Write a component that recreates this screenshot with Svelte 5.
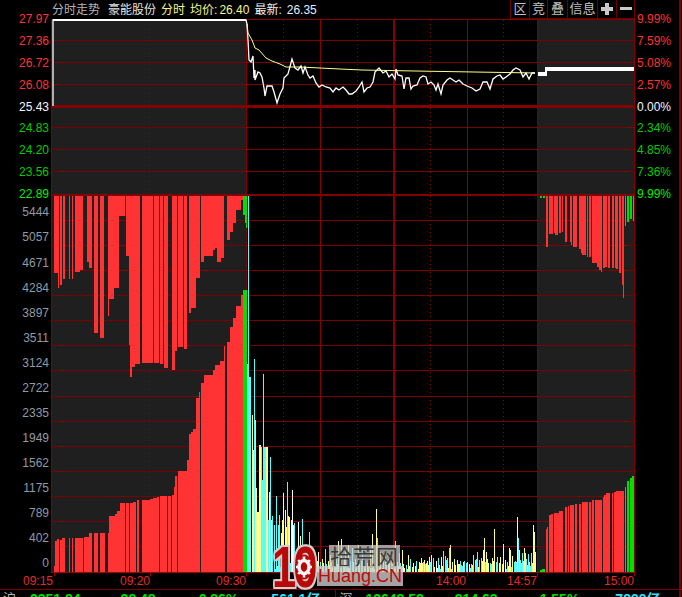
<script>
  const RED = '#ff3333';
  const GREEN = '#00e000';
  const COL = { c: '#55ffff', y: '#ffff88', w: '#ffffff' };

  const priceLeft = [
    ['27.97', 'up'], ['27.36', 'up'], ['26.72', 'up'], ['26.08', 'up'], ['25.43', 'flat'],
    ['24.83', 'down'], ['24.20', 'down'], ['23.56', 'down'], ['22.89', 'down bright']
  ];
  const priceRight = [
    ['9.99%', 'up'], ['7.59%', 'up'], ['5.08%', 'up'], ['2.57%', 'up'], ['0.00%', 'flat'],
    ['2.34%', 'down'], ['4.85%', 'down'], ['7.36%', 'down'], ['9.99%', 'down bright']
  ];
  const volumes = [5444, 5057, 4671, 4284, 3897, 3511, 3124, 2722, 2335, 1949, 1562, 1175, 789, 402, 0];

  const thinH = [40, 62, 84, 127.5, 149.5, 171.5, 220, 245, 270, 295, 320, 345, 370, 396, 421, 446, 471, 496, 521, 546];
  const dotted = [149, 283, 357, 430, 503];
  const solidV = [246.5, 320.5, 467.5];
  const ticks = [54, 150, 246, 467, 537, 634];

  // morning auction, hanging from the top: [x0, x1, bottom] in 3x-zoom x units
  const hangL = [
    [162,175,273],[175,178,288],[181,187,285],[189,195,279],[207,211,279],[216,220,279],[225,240,272],
    [240,250,270],[260,267,262],[267,277,268],[283,295,333],[300,312,338],[323,326,316],[326,343,299],
    [343,358,288],[358,375,216],[378,386,256],[386,390,345],[390,397,377],[397,404,367],[404,420,364],
    [426,460,363],[461,478,363],[480,488,364],[493,503,368],[516,525,370],[525,532,351],[534,548,347],
    [552,562,349],[568,572,313],[572,588,308],[588,600,278],[604,612,262],[612,640,256],[640,645,250],
    [645,652,248],[652,662,262],[662,672,258],[680,690,240],[690,700,232],[700,708,223],[708,722,210],[722,729,200]
  ];
  // morning auction, standing on the floor: [x0, x1, top]
  const standL = [
    [162,165,566],[165,171,541],[171,177,539],[181,185,540],[187,195,538],[207,210,538],[216,219,538],
    [225,240,538],[240,250,538],[252,260,537],[260,267,537],[267,277,533],[282,293,533],[300,315,533],
    [323,327,533],[327,345,516],[345,350,514],[350,360,511],[360,375,503],[378,388,503],[390,400,503],
    [400,408,502],[410,418,500],[426,450,500],[450,460,499],[460,472,498],[472,478,497],[480,488,496],
    [490,500,496],[503,512,496],[516,522,495],[522,526,487],[526,532,476],[534,548,471],[548,560,471],
    [562,566,460],[568,573,434],[573,580,432],[580,588,429],[588,596,398],[596,600,392],[604,612,383],
    [612,640,375],[640,645,370],[645,660,365],[660,672,361],[672,676,346],[680,690,342],[690,700,327],
    [700,708,318],[708,722,306],[722,729,295]
  ];
  // closing auction: x in 3x units from x = 530
  const hangR = [
    [47,54,247],[57,62,234],[63,69,234],[72,75,233],[75,84,235],[86,93,233],[95,100,232],[105,111,242],
    [120,123,242],[123,126,245],[128,141,247],[147,152,249],[152,157,253],[157,168,255],[171,174,257],
    [176,183,257],[186,192,263],[192,200,263],[200,207,267],[207,212,270],[212,216,272],[219,225,268],
    [225,231,267],[234,240,268],[245,251,268],[254,258,268],[258,263,269],[267,274,273],[276,280,285],[280,282,298]
  ];
  const hangRG = [[285,288,226],[291,297,222],[300,305,219],[308,312,221]];
  // closing auction: x in 3x units from x = 340
  const standR = [
    [618,622,529],[622,625,527],[627,632,515],[633,640,514],[642,650,513],[651,656,513],[658,668,511],
    [675,681,507],[684,688,506],[690,696,505],[697,703,505],[705,712,504],[716,722,504],[725,735,502],
    [736,745,502],[746,752,502],[757,763,500],[765,773,500],[775,785,500],[788,793,497],[793,798,495],
    [798,810,493],[815,820,493],[822,828,492],[828,838,491],[838,851,491]
  ];
  const standRG = [[600,605,570],[607,614,569],[855,858,487],[862,867,481],[869,875,478],[877,881,476]];

  const seg = (list, off) => list.map(([a, b, v]) => {
    const x = off + Math.round(a / 3);
    return { x, w: Math.max(1, off + Math.round(b / 3) - x), v };
  });

  const bars = [
    ...seg(hangL, 0).map((s) => ({ ...s, y: 196, h: s.v - 196, f: RED })),
    ...seg(standL, 0).map((s) => ({ ...s, y: s.v, h: 572 - s.v, f: RED })),
    ...seg(hangR, 530).map((s) => ({ ...s, y: 196, h: s.v - 196, f: RED })),
    ...seg(hangRG, 530).map((s) => ({ ...s, y: 196, h: s.v - 196, f: GREEN })),
    ...seg(standR, 340).map((s) => ({ ...s, y: s.v, h: 572 - s.v, f: RED })),
    ...seg(standRG, 340).map((s) => ({ ...s, y: s.v, h: 572 - s.v, f: GREEN })),
    { x: 243, w: 2, y: 196, h: 19, f: GREEN },
    { x: 245, w: 1, y: 196, h: 27, f: GREEN },
    { x: 246, w: 1, y: 196, h: 32, f: GREEN },
    { x: 243, w: 4, y: 290, h: 282, f: GREEN },
    { x: 540, w: 2, y: 196, h: 2, f: GREEN },
    { x: 543, w: 2, y: 196, h: 2, f: GREEN }
  ];

  // continuous session volume: [x, top, colour]
  const tall = [
    [247,364,'c'],[248,196,'c'],[249,377,'c'],[250,377,'c'],[252,415,'y'],[253,450,'y'],[254,359,'c'],
    [255,420,'y'],[256,488,'y'],[257,512,'w'],[258,512,'y'],[259,445,'y'],[260,445,'y'],[261,447,'c'],
    [262,480,'c'],[263,374,'c'],[264,447,'c'],[265,447,'c'],[266,447,'y'],[267,447,'y'],[268,520,'c'],[269,492,'y'],
    [270,457,'c'],[271,520,'w'],[272,516,'c'],[274,525,'c'],[276,496,'c'],[278,525,'c'],[279,515,'c'],
    [281,533,'y'],[282,520,'y'],[283,493,'y'],[285,510,'y'],[286,527,'y'],[287,482,'c'],[288,516,'y'],
    [289,517,'y'],[291,520,'y'],[292,490,'w'],[293,525,'y'],[294,523,'c'],[298,522,'w'],[300,536,'y'],
    [302,519,'c'],[305,545,'c'],[309,532,'c'],[318,552,'y'],[325,549,'c'],[330,555,'y'],[336,558,'c'],
    [338,541,'y'],[341,539,'y'],[345,548,'c'],[348,545,'y'],[352,548,'c'],[358,545,'y'],[362,550,'c'],
    [370,548,'y'],[372,534,'y'],[376,509,'y'],[377,538,'c'],[380,552,'y'],[385,553,'c'],[395,541,'c'],
    [399,553,'c'],[402,550,'y'],[408,555,'y'],[413,563,'y'],[415,566,'y'],[420,563,'y'],[421,558,'y'],
    [423,562,'c'],[426,563,'y'],[429,557,'y'],[431,555,'y'],[433,558,'c'],[436,561,'w'],[438,558,'c'],
    [441,557,'y'],[443,551,'c'],[445,556,'c'],[447,558,'c'],[449,548,'c'],[450,545,'y'],[447,564,'y'],
    [455,565,'y'],[459,564,'y'],[462,566,'c'],[464,561,'c'],[467,562,'y'],[469,564,'y'],[471,564,'c'],
    [473,555,'c'],[475,560,'c'],[477,552,'c'],[479,560,'c'],[481,558,'c'],[483,550,'y'],[484,538,'y'],
    [486,552,'y'],[490,563,'c'],[492,558,'y'],[494,529,'y'],[497,557,'c'],[500,557,'y'],[503,544,'y'],
    [505,560,'y'],[507,562,'c'],[509,548,'y'],[510,550,'y'],[512,556,'y'],[514,562,'c'],[517,549,'y'],
    [519,550,'y'],[522,553,'c'],[524,548,'y'],[516,562,'c'],[517,517,'y'],[518,538,'c'],[520,560,'c'],
    [523,561,'y'],[525,553,'y'],[526,559,'c'],[528,554,'c'],[531,553,'c'],[533,525,'y'],[534,532,'y'],[535,552,'y']
  ];
  const taken = new Set(tall.map((b) => b[0]));
  const fill = [];
  for (let x = 268; x < 536; x++) {
    if (!taken.has(x) && x % 3 !== 0) {
      fill.push([x, 572 - (3 + ((x * 7) % 11)), x % 5 < 2 ? 'c' : 'y']);
    }
  }
  const vols = [...fill, ...tall];

  const priceLine = '53,106 53,20 246,20 247,24 248,40 249,60 251,62 253,56 254,78 255,70 255,80 258,72 260,73 262,77 264,88 265,96 267,86 272,86 274,92 277,103 280,94 283,88 284,78 288,74 292,59 295,68 298,70 301,66 303,73 305,67 308,75 310,78 313,76 316,83 319,87 322,85 326,87 330,88 333,92 336,88 339,90 343,87 346,90 349,94 352,94 356,91 359,87 362,82 364,92 367,88 370,87 373,82 375,72 379,68 383,73 386,71 389,77 392,74 395,79 396,69 398,75 402,76 404,89 406,78 409,78 411,89 413,86 417,85 420,78 423,76 426,77 428,84 431,82 434,85 436,90 438,84 441,94 443,85 447,80 450,78 453,80 456,82 459,80 463,84 467,86 472,88 476,91 480,89 483,82 487,82 490,89 493,79 497,76 500,75 503,79 506,77 510,74 513,70 516,68 520,70 523,77 526,73 529,79 532,73 535,73';
  const avgLine = '247,24 248,33 252,40 255,48 259,50 266,58 272,61 280,64 286,67 300,67 320,68 340,69 362,70 415,71 474,72 535,73';

  const times = [
    ['09:15', 53], ['09:20', 97], ['09:30', 96], ['14:00', 220], ['14:57', 71], ['15:00', 97]
  ];
</script>

<div class="screen">
  <header class="top">
    <span class="name">分时走势</span>
    <span class="stock">豪能股份</span>
    <span class="tag">分时</span>
    <span class="tag">均价:</span><span class="tag num">26.40</span>
    <span class="latest">最新:</span><span class="latest num cool">26.35</span>
    <nav class="tools">
      <span class="tool w19">区</span>
      <span class="tool w18">竞</span>
      <span class="tool w20">叠</span>
      <span class="tool w30">信息</span>
      <span class="tool w19">
        <svg width="12" height="12" viewBox="0 0 12 12"><path d="M4 0h4v4h4v4H8v4H4V8H0V4h4z" fill="#c8c8c8" /></svg>
      </span>
      <span class="tool w19 last">
        <svg width="12" height="12" viewBox="0 0 12 12"><rect y="4" width="12" height="3" fill="#c8c8c8" /></svg>
      </span>
    </nav>
  </header>

  <div class="body">
    <div class="axis left">
      <div class="prices">
        {#each priceLeft as [t, c]}<div class="p {c}">{t}</div>{/each}
      </div>
      <div class="volumes">
        {#each volumes as v}<div class="v">{v}</div>{/each}
      </div>
    </div>

    <svg class="chart" width="584" height="554" viewBox="51 19 584 554" shape-rendering="crispEdges">
      <rect x="52" y="19" width="195" height="553" fill="#1f1f1f" />
      <rect x="537" y="19" width="98" height="553" fill="#1f1f1f" />

      {#each thinH as y}
        <line x1="51" x2="635" y1={y} y2={y} stroke="#7c0000" />
      {/each}
      <rect x="51" y="105" width="584" height="3" fill="#850000" />
      <rect x="51" y="194" width="584" height="2" fill="#850000" />
      <rect x="51" y="19" width="584" height="1" fill="#850000" />
      <rect x="51" y="572" width="584" height="1" fill="#a00000" />

      {#each dotted as x}
        <line x1={x + 0.5} x2={x + 0.5} y1="20" y2="572" stroke="#900000" stroke-dasharray="1 3" />
      {/each}
      {#each solidV as x}
        <line x1={x} x2={x} y1="20" y2="572" stroke="#850000" />
      {/each}
      <rect x="393" y="20" width="2" height="552" fill="#850000" />
      <rect x="51" y="19" width="1" height="553" fill="#850000" />
      <rect x="634" y="19" width="1" height="553" fill="#850000" />
      <rect x="537" y="20" width="1" height="552" fill="#5a1010" />

      {#each bars as b}
        <rect x={b.x} y={b.y} width={b.w} height={b.h} fill={b.f} />
      {/each}
      {#each vols as [x, top, c]}
        <rect {x} y={top} width="1" height={572 - top} fill={COL[c]} />
      {/each}

      <g shape-rendering="auto" fill="none">
        <polyline points={avgLine} stroke="#ffff88" stroke-width="1" />
        <polyline points={priceLine} stroke="#ffffff" stroke-width="1.3" />
      </g>
      <rect x="53" y="19" width="193" height="2" fill="#fff" />
      <rect x="538" y="72" width="7" height="4" fill="#fff" />
      <rect x="545" y="67" width="89" height="4" fill="#fff" />
      <rect x="545" y="67" width="2" height="9" fill="#fff" />

      {#each ticks as x}
        <rect {x} y="572" width="1" height="4" fill="#a00000" />
      {/each}
    </svg>

    <div class="axis right">
      {#each priceRight as [t, c]}<div class="p {c}">{t}</div>{/each}
    </div>
  </div>

  <div class="times">
    {#each times as [t, w]}
      <span class="time" style="width:{w}px">{t}</span>
    {/each}
  </div>

  <footer class="status">
    <span class="idx">沪</span>
    <span class="g a1">2351.84</span>
    <span class="g a2">28.48</span>
    <span class="g a3">0.86%</span>
    <span class="c a4">561.1亿</span>
    <span class="sep"></span>
    <span class="idx">深</span>
    <span class="g b1">12648.58</span>
    <span class="g b2">814.63</span>
    <span class="g b3">1.55%</span>
    <span class="c b4">7899亿</span>
  </footer>

  <div class="mark">
    <span class="ten">10</span>
    <svg class="gear" width="18" height="26" viewBox="0 0 18 26">
      <ellipse cx="9" cy="13" rx="8.5" ry="12.5" fill="#b80808" />
      <ellipse cx="9" cy="13" rx="5" ry="6.5" fill="none" stroke="#f4f4f4" stroke-width="3.5" />
      <g stroke="#f4f4f4" stroke-width="2.6">
        <path d="M9 2.5v4M9 19.5v4M1 13h3M14 13h3M3.2 6l2.6 3M14.8 6l-2.6 3M3.2 20l2.6-3M14.8 20l-2.6-3" />
      </g>
      <circle cx="9" cy="13" r="2.2" fill="#b80808" />
    </svg>
    <span class="han">拾荒网</span>
    <span class="en">Huang.CN</span>
  </div>
</div>

<style>
  :global(body) {
    margin: 0;
    background: #000;
  }
  .screen {
    position: relative;
    width: 682px;
    height: 597px;
    background: linear-gradient(#7c0000, #7c0000) 679px 0 / 2px 100% no-repeat #000;
    overflow: hidden;
    font-family: "Liberation Sans", Arial, "Noto Sans CJK SC", sans-serif;
    font-size: 12px;
  }

  .top {
    display: flex;
    align-items: center;
    height: 19px;
    padding: 0 47px 0 52px;
    box-sizing: border-box;
    white-space: nowrap;
    font-family: "Liberation Sans", "Noto Sans CJK SC", sans-serif;
    line-height: 18px;
  }
  .name { color: #b4b4b4; }
  .stock { color: #e4e4e4; margin-left: 8px; }
  .tag { color: #f6f68c; margin-left: 5px; }
  .num { margin-left: 2px; }
  .latest { color: #f0f0f0; margin-left: 5px; }
  .cool { color: #e0f0ff; }
  .tools {
    display: flex;
    margin-left: auto;
    height: 19px;
  }
  .tool {
    display: flex;
    align-items: center;
    justify-content: center;
    box-sizing: border-box;
    height: 19px;
    border-left: 1px solid #6a0000;
    border-bottom: 1px solid #6a0000;
    color: #c0c0c0;
    font-size: 13px;
  }
  .w18 { width: 18px; }
  .w19 { width: 19px; }
  .w20 { width: 20px; }
  .w30 { width: 30px; }
  .last { border-right: 1px solid #6a0000; }

  .body {
    display: grid;
    grid-template-columns: 51px 584px 47px;
    height: 554px;
  }
  .axis {
    display: flex;
    flex-direction: column;
    line-height: 1;
  }
  .left {
    align-items: stretch;
    text-align: right;
    padding-right: 2px;
    margin-top: -10px;
  }
  .right {
    margin-top: -10px;
    padding-left: 2px;
  }
  .p {
    height: 21.9px;
    line-height: 21.9px;
    font-size: 12px;
    flex: none;
  }
  .volumes {
    margin-top: -5.6px;
  }
  .v {
    height: 25.07px;
    line-height: 25.07px;
    color: #8f9aa6;
  }
  .up { color: #ff3232; }
  .flat { color: #f2f8ff; }
  .down { color: #00cc00; }
  .bright { color: #00ee00; }

  .chart {
    display: block;
    overflow: visible;
  }

  .times {
    display: flex;
    height: 16px;
    line-height: 16px;
    color: #e52a2a;
    box-sizing: border-box;
  }
  .time {
    text-align: right;
    flex: none;
  }

  .status {
    position: relative;
    display: flex;
    align-items: flex-start;
    height: 8px;
    border-top: 1px solid #7c0000;
    overflow: hidden;
    font-size: 14px;
    line-height: 14px;
    white-space: nowrap;
    padding-top: 2px;
    box-sizing: border-box;
    font-weight: bold;
  }
  .idx {
    color: #b4b4b4;
    font-weight: normal;
    font-size: 13px;
    width: 0;
    margin-left: 3px;
  }
  .g { color: #00e000; }
  .c { color: #33e0ff; }
  .a1 { margin-left: 27px; }
  .a2 { margin-left: 40px; }
  .a3 { margin-left: 43px; }
  .a4 { margin-left: 33px; }
  .sep {
    width: 1px;
    height: 8px;
    margin: -2px 0 0 15px;
    background: #7c0000;
  }
  .b1 { margin-left: 26px; }
  .b2 { margin-left: 31px; }
  .b3 { margin-left: 42px; }
  .b4 { margin-left: 36px; }

  .mark {
    position: absolute;
    left: 272px;
    top: 545px;
    width: 132px;
    height: 44px;
  }
  .ten {
    position: absolute;
    left: 0;
    top: 0;
    font-size: 58px;
    line-height: 44px;
    font-weight: bold;
    color: #b80808;
    letter-spacing: -4px;
    transform: scaleX(0.75);
    transform-origin: left top;
    text-shadow: 2px 0 0 #cfcfcf, -2px 0 0 #cfcfcf, 0 2px 0 #cfcfcf, 0 -2px 0 #cfcfcf, 2px 2px 0 #cfcfcf, -2px -2px 0 #cfcfcf, 2px -2px 0 #cfcfcf, -2px 2px 0 #cfcfcf;
  }
  .gear {
    position: absolute;
    left: 23px;
    top: 9px;
  }
  .han {
    position: absolute;
    left: 57px;
    top: 0;
    padding: 0 1px;
    font-size: 22px;
    line-height: 21px;
    color: #3a3a3a;
    background: rgba(205, 205, 205, 0.75);
    font-family: "Noto Sans CJK SC", sans-serif;
    letter-spacing: 1px;
  }
  .en {
    position: absolute;
    left: 45px;
    top: 21px;
    padding: 0 1px;
    font-size: 18px;
    line-height: 20px;
    color: #bb0a0a;
    background: rgba(205, 205, 205, 0.8);
  }
</style>
